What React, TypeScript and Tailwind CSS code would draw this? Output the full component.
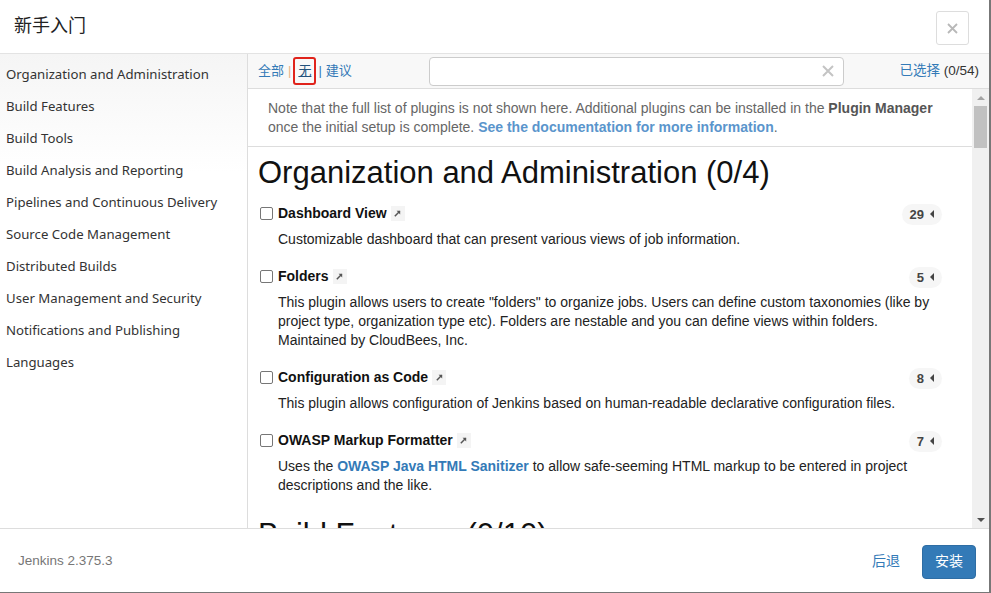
import React from 'react';

const categories = [
  'Organization and Administration',
  'Build Features',
  'Build Tools',
  'Build Analysis and Reporting',
  'Pipelines and Continuous Delivery',
  'Source Code Management',
  'Distributed Builds',
  'User Management and Security',
  'Notifications and Publishing',
  'Languages',
];

const ExtArrow = () => (
  <span className="inline-flex items-center justify-center w-[14px] h-[15px] bg-[#f4f4f4] ml-[4px] align-middle">
    <svg width="9" height="9" viewBox="0 0 10 10">
      <path d="M2 8 L7.5 2.5" stroke="#555" strokeWidth="1.6" />
      <path d="M4 2 H8 V6 Z" fill="#555" />
    </svg>
  </span>
);

const Badge = ({ n }: { n: number }) => (
  <span className="inline-flex items-center h-[21px] px-[8px] rounded-full bg-[#f6f6f6] text-[13px] font-bold text-[#444] gap-[6px]">
    {n}
    <span className="w-0 h-0 border-y-[4px] border-y-transparent border-r-[4px] border-r-[#444]" />
  </span>
);

const Plugin = ({ name, count, children }: { name: string; count: number; children: React.ReactNode }) => (
  <div className="pl-[12px] pr-[30px] pb-[17px]">
    <div className="flex items-center h-[21px]">
      <span className="w-[13px] h-[13px] border border-[#767676] rounded-[2px] bg-white mr-[5px]" />
      <span className="font-bold text-[14px] text-[#111]">{name}</span>
      <ExtArrow />
      <span className="ml-auto">
        <Badge n={count} />
      </span>
    </div>
    <p className="pl-[18px] mt-[6px] text-[14px] leading-[19px] text-[#222]">{children}</p>
  </div>
);

export default function App() {
  return (
    <div
      className="w-[991px] h-[593px] flex flex-col bg-white border-r-2 border-b border-[#777] overflow-hidden"
      style={{ fontFamily: '"Liberation Sans", "Noto Sans CJK SC", sans-serif' }}
    >
      {/* header */}
      <div className="h-[54px] shrink-0 flex items-center justify-between pl-[14px] pr-[20px] border-b border-[#e3e3e3]">
        <h1 className="text-[18px] text-[#222] font-normal">新手入门</h1>
        <button className="w-[33px] h-[34px] mt-[3px] border border-[#ddd] rounded-[3px] flex items-center justify-center text-[#b5b5b5]">
          <svg width="11" height="11" viewBox="0 0 11 11">
            <path d="M1 1 L10 10 M10 1 L1 10" stroke="#b8b8b8" strokeWidth="1.8" />
          </svg>
        </button>
      </div>

      {/* body */}
      <div className="flex flex-1 min-h-0">
        <div className="w-[248px] shrink-0 border-r border-[#ddd] bg-gradient-to-b from-[#f5f5f5] to-white to-[25%] pt-[5px]">
          {categories.map((c) => (
            <div key={c} className="h-[32px] flex items-center pl-[6px] text-[#333]" style={{ fontFamily: '"Noto Sans", sans-serif', fontSize: '13.2px' }}>
              {c}
            </div>
          ))}
        </div>

        <div className="flex-1 flex flex-col min-w-0">
          {/* toolbar */}
          <div className="h-[35px] shrink-0 flex items-center bg-[#f8f8f8] border-b border-[#ddd] pl-[10px] pr-[10px] text-[13px]">
            <span className="text-[#337ab7]">全部</span>
            <span className="text-[#e9b48a] ml-[4px] mr-[2px]">|</span>
            <span className="border-2 border-[#e0231b] rounded-[3px] px-[3px] h-[28px] flex items-center text-[#23527c] underline">无</span>
            <span className="text-[#337ab7] ml-[2px] mr-[4px]">|</span>
            <span className="text-[#337ab7]">建议</span>
            <div className="ml-[77px] w-[415px] h-[29px] border border-[#ccc] rounded-[4px] bg-white flex items-center justify-end pr-[9px]">
              <svg width="12" height="12" viewBox="0 0 12 12">
                <path d="M1 1 L11 11 M11 1 L1 11" stroke="#c4c4c4" strokeWidth="2" />
              </svg>
            </div>
            <span className="ml-auto text-[13.5px] text-[#337ab7]">
              已选择 <span className="text-[#333]">(0/54)</span>
            </span>
          </div>

          {/* content */}
          <div className="flex flex-1 min-h-0">
            <div className="flex-1 overflow-hidden">
              <div className="px-[20px] pt-[10px] pb-[9px] border-b border-[#ddd] text-[14px] leading-[19px] text-[#666]">
                Note that the full list of plugins is not shown here. Additional plugins can be installed in the{' '}
                <b className="text-[#555]">Plugin Manager</b> once the initial setup is complete.{' '}
                <b className="text-[#5a95cc]">See the documentation for more information</b>.
              </div>
              <h2 className="pl-[10px] mt-[8px] mb-[12px] text-[31px] leading-[36px] text-[#111] font-normal">
                Organization and Administration (0/4)
              </h2>
              <Plugin name="Dashboard View" count={29}>
                Customizable dashboard that can present various views of job information.
              </Plugin>
              <Plugin name="Folders" count={5}>
                This plugin allows users to create "folders" to organize jobs. Users can define custom taxonomies (like by
                project type, organization type etc). Folders are nestable and you can define views within folders.
                Maintained by CloudBees, Inc.
              </Plugin>
              <Plugin name="Configuration as Code" count={8}>
                This plugin allows configuration of Jenkins based on human-readable declarative configuration files.
              </Plugin>
              <Plugin name="OWASP Markup Formatter" count={7}>
                Uses the <b className="text-[#337ab7]">OWASP Java HTML Sanitizer</b> to allow safe-seeming HTML markup to be entered in project
                descriptions and the like.
              </Plugin>
              <h2 className="pl-[10px] mt-[5px] text-[31px] leading-[36px] text-[#111] font-normal">Build Features (0/10)</h2>
            </div>

            {/* scrollbar */}
            <div className="w-[17px] shrink-0 bg-[#f0f0f0] flex flex-col items-center">
              <div className="h-[17px] flex items-center justify-center">
                <span className="w-0 h-0 border-x-[4px] border-x-transparent border-b-[4px] border-b-[#a3a3a3]" />
              </div>
              <div className="w-[13px] h-[42px] bg-[#c1c1c1]" />
              <div className="flex-1" />
              <div className="h-[17px] flex items-center justify-center">
                <span className="w-0 h-0 border-x-[4px] border-x-transparent border-t-[4px] border-t-[#505050]" />
              </div>
            </div>
          </div>
        </div>
      </div>

      {/* footer */}
      <div className="h-[64px] shrink-0 border-t border-[#ddd] flex items-center pl-[18px] pr-[13px] pt-[2px]">
        <span className="text-[13.5px] text-[#777]">Jenkins 2.375.3</span>
        <span className="ml-auto text-[14px] text-[#337ab7] mr-[22px]">后退</span>
        <button className="h-[34px] px-[12px] rounded-[4px] bg-[#337ab7] border border-[#2e6da4] text-white text-[14px]">安装</button>
      </div>
    </div>
  );
}
